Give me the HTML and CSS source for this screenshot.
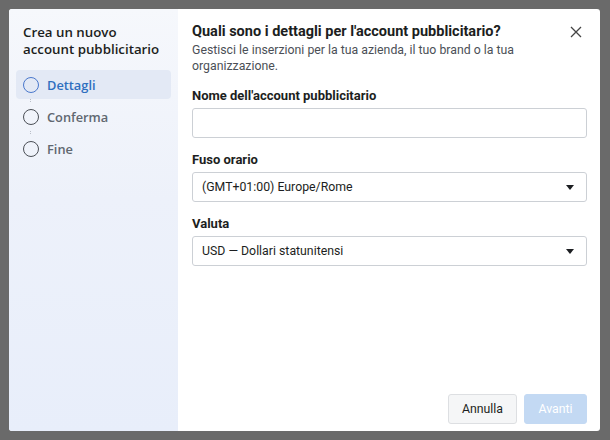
FILE: index.html
```html
<!DOCTYPE html>
<html lang="it">
<head>
<meta charset="utf-8">
<link rel="stylesheet" href="styles.css">
</head>
<body>
<div class="dialog">
  <aside class="side">
    <h2 class="side-title">Crea un nuovo account pubblicitario</h2>
    <ul class="steps">
      <li class="step active"><span class="dot"></span><span>Dettagli</span></li>
      <li class="sep"></li>
      <li class="step"><span class="dot"></span><span>Conferma</span></li>
      <li class="sep"></li>
      <li class="step"><span class="dot"></span><span>Fine</span></li>
    </ul>
  </aside>
  <main class="main">
    <header class="head">
      <div>
        <h1 class="title">Quali sono i dettagli per l'account pubblicitario?</h1>
        <p class="sub">Gestisci le inserzioni per la tua azienda, il tuo brand o la tua organizzazione.</p>
      </div>
      <button class="close" aria-label="Chiudi"><svg width="12" height="12" viewBox="0 0 12 12"><path d="M1 1L11 11M11 1L1 11" stroke="#444" stroke-width="1.3" fill="none"/></svg></button>
    </header>
    <div class="field">
      <label class="label">Nome dell'account pubblicitario</label>
      <div class="box"></div>
    </div>
    <div class="field">
      <label class="label">Fuso orario</label>
      <div class="box select"><span>(GMT+01:00) Europe/Rome</span><span class="caret"></span></div>
    </div>
    <div class="field">
      <label class="label">Valuta</label>
      <div class="box select"><span>USD — Dollari statunitensi</span><span class="caret"></span></div>
    </div>
    <footer class="foot">
      <button class="btn">Annulla</button>
      <button class="btn primary">Avanti</button>
    </footer>
  </main>
</div>
</body>
</html>
```
FILE: styles.css
```css
* { box-sizing: border-box; }
html, body { margin: 0; padding: 0; }
body {
  width: 610px; height: 440px;
  background: #6a6a6a;
  padding: 9px 10px 9px 9px;
  font-family: Roboto, "Liberation Sans", Arial, sans-serif;
}
.dialog {
  display: flex;
  width: 591px; height: 422px;
  background: #fff;
  border-radius: 3px;
  overflow: hidden;
}
.side {
  width: 169px;
  padding: 15px 7px 0 7px;
  background: linear-gradient(180deg, #f6f8fc 0%, #edf1fa 45%, #e8eefa 100%);
}
.side-title {
  margin: 0 0 12px 7px;
  font-family: "Open Sans", sans-serif;
  font-size: 13.3px; line-height: 17px;
  font-weight: 600;
  color: #1c1e21;
}
.steps { list-style: none; margin: 0; padding: 0; }
.step {
  display: flex; align-items: center; gap: 8px;
  height: 29px; padding-left: 7px;
  border-radius: 4px;
  font-family: "Open Sans", sans-serif;
  font-size: 12.8px; font-weight: 600;
  color: #606770;
}
.step.active { background: #e3e9f5; color: #2f6fbf; }
.dot {
  width: 16px; height: 16px;
  border: 1.6px solid #4b4f56;
  border-radius: 50%;
}
.step.active .dot { border-color: #4a78cc; }
.sep {
  height: 3px; margin-left: 14px;
  border-left: 1px dotted #b9bec7;
}
.main {
  flex: 1;
  display: flex; flex-direction: column;
  padding: 14px 13px 7px 14px;
}
.head { display: flex; justify-content: space-between; align-items: flex-start; margin-bottom: 14px; }
.title { margin: 0; font-size: 14.5px; line-height: 18px; font-weight: 700; color: #1c1e21; }
.sub { margin: 1px 0 0; font-size: 12.3px; line-height: 16px; color: #4b4f56; width: 350px; }
.close { border: 0; background: none; padding: 0; margin: 3px 5px 0 0; width: 12px; height: 12px; display: flex; }
.field { margin-bottom: 14px; }
.label { display: block; font-size: 13px; font-weight: 700; color: #1c1e21; line-height: 16px; margin-bottom: 4px; }
.box {
  height: 30px;
  border: 1px solid #ccd0d5;
  border-radius: 3px;
  background: #fff;
}
.select {
  display: flex; align-items: center; justify-content: space-between;
  padding: 0 12px 0 9px;
  font-size: 12.3px; color: #1c1e21;
}
.caret {
  width: 0; height: 0;
  border-left: 4.5px solid transparent;
  border-right: 4.5px solid transparent;
  border-top: 5px solid #1c1e21;
}
.foot { margin-top: auto; display: flex; justify-content: flex-end; gap: 7px; }
.btn {
  height: 30px; padding: 0 13px;
  border: 1px solid #dddfe2; border-radius: 3px;
  background: #f5f6f7;
  font-family: Roboto, "Liberation Sans", Arial, sans-serif;
  font-size: 12.3px; color: #1c1e21;
}
.btn.primary { background: #c3d9f3; border-color: #c3d9f3; color: #fff; width: 63px; }
```
